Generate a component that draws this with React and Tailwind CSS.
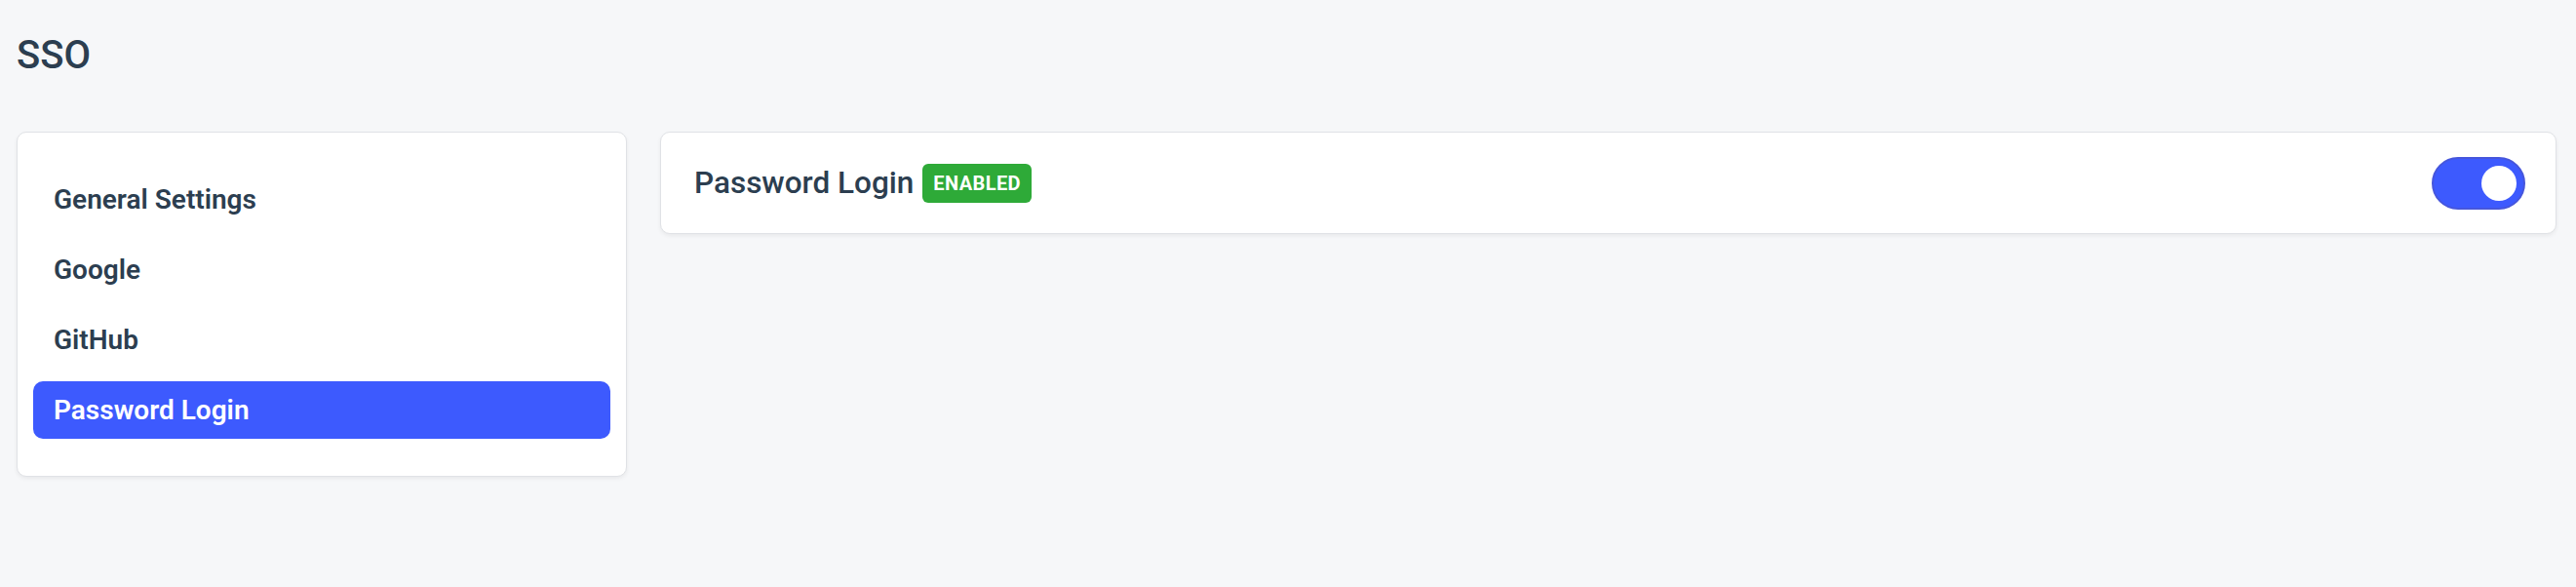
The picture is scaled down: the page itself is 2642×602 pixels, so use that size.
const menu = ['General Settings', 'Google', 'GitHub', 'Password Login'];

export default function App() {
  const active = 'Password Login';

  return (
    <div
      className="min-h-screen bg-[#f6f7f9] pl-[17px] pr-[20px] pt-[33px] text-[#2c3e50]"
      style={{ fontFamily: 'Roboto, "Liberation Sans", sans-serif' }}
    >
      <h1 className="text-[40px] leading-[48px] font-medium">SSO</h1>

      <div className="mt-[54px] flex items-start gap-[34px]">
        {/* Sidebar */}
        <div className="w-[626px] shrink-0 rounded-[10px] border border-[#e0e2e6] bg-white px-[16px] pt-[39px] pb-[38px] shadow-[0_2px_4px_rgba(0,0,0,0.06)]">
          <ul className="flex flex-col gap-[13px]">
            {menu.map((item) => (
              <li
                key={item}
                className={
                  item === active
                    ? 'flex h-[59px] items-center rounded-[10px] bg-[#3d5afe] pl-[21px] text-[28px] font-semibold text-white'
                    : 'flex h-[59px] items-center rounded-[10px] pl-[21px] text-[28px] font-semibold text-[#2c3e50]'
                }
              >
                {item}
              </li>
            ))}
          </ul>
        </div>

        {/* Content */}
        <div className="flex h-[105px] flex-1 items-center justify-between rounded-[10px] border border-[#e0e2e6] bg-white pl-[34px] pr-[31px] shadow-[0_2px_4px_rgba(0,0,0,0.06)]">
          <div className="flex items-center gap-[9px]">
            <span className="text-[31.5px] font-medium">Password Login</span>
            <span className="flex h-[40px] items-center rounded-[6px] bg-[#2eaa38] px-[11px] text-[20px] font-bold tracking-[0.02em] text-white">
              ENABLED
            </span>
          </div>

          <button
            type="button"
            className="flex h-[54px] w-[96px] items-center justify-end rounded-full border-2 border-[#4656dc] bg-[#3d5afe] pr-[7px]"
          >
            <span className="h-[36px] w-[36px] rounded-full bg-white" />
          </button>
        </div>
      </div>
    </div>
  );
}
